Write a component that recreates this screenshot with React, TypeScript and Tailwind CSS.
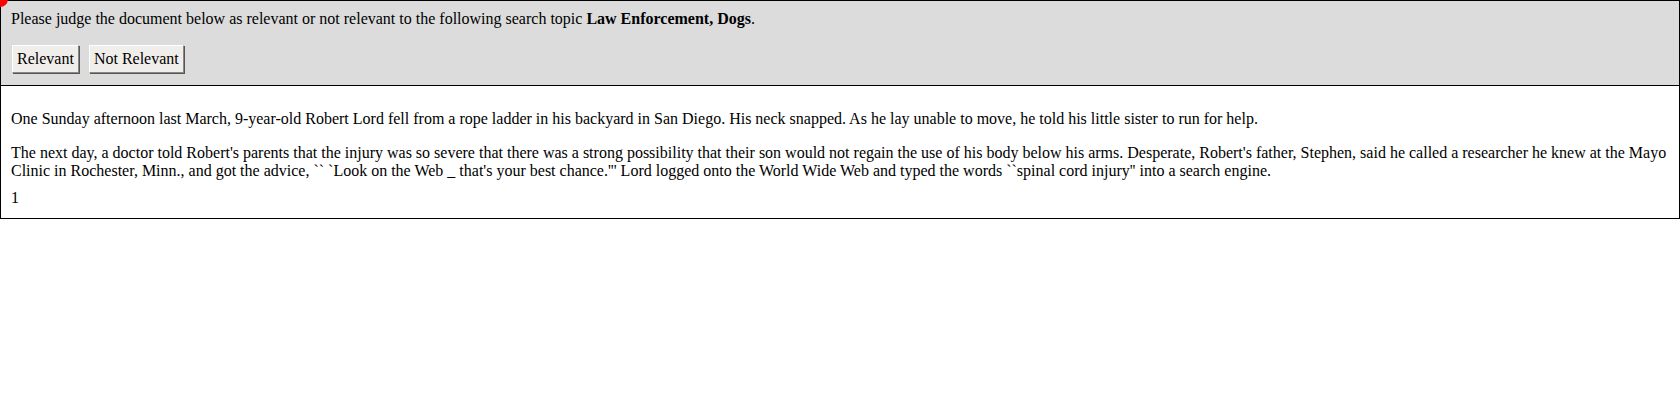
import React from "react";

const App = () => {
  return (
    <div className="relative w-full font-['Liberation_Serif',serif] text-[16px] leading-[18px] text-black">
      <div className="absolute left-[-8px] top-[-9px] h-4 w-4 rounded-full bg-[#ff0000]" />

      <div className="border border-black bg-[#dcdcdc] px-[10px] pt-[9px] pb-[12px]">
        <div>
          Please judge the document below as relevant or not relevant to the following search topic{" "}
          <b>Law Enforcement, Dogs</b>.
        </div>
        <div className="mt-[17px] flex gap-[10px] pl-[1px]">
          <button className="h-[28px] border border-t-white border-l-white border-b-[#888] border-r-[#888] bg-[#f0eeea] px-[4px] shadow-[1px_1px_0_#555]">
            Relevant
          </button>
          <button className="h-[28px] border border-t-white border-l-white border-b-[#888] border-r-[#888] bg-[#f0eeea] px-[4px] shadow-[1px_1px_0_#555]">
            Not Relevant
          </button>
        </div>
      </div>

      <div className="border border-t-0 border-black px-[10px] pt-[8px] pb-[11px]">
        <p className="my-4">
          One Sunday afternoon last March, 9-year-old Robert Lord fell from a rope ladder in his backyard in San Diego. His neck snapped. As he lay unable to move, he told his little sister to run for help.
        </p>
        <p className="mt-4 mb-0">
          The next day, a doctor told Robert's parents that the injury was so severe that there was a strong possibility that their son would not regain the use of his body below his arms. Desperate, Robert's father, Stephen, said he called a researcher he knew at the Mayo Clinic in Rochester, Minn., and got the advice, `` `Look on the Web _ that's your best chance.''' Lord logged onto the World Wide Web and typed the words ``spinal cord injury'' into a search engine.
        </p>
        <div className="mt-[9px]">1</div>
      </div>
    </div>
  );
};

export default App;
